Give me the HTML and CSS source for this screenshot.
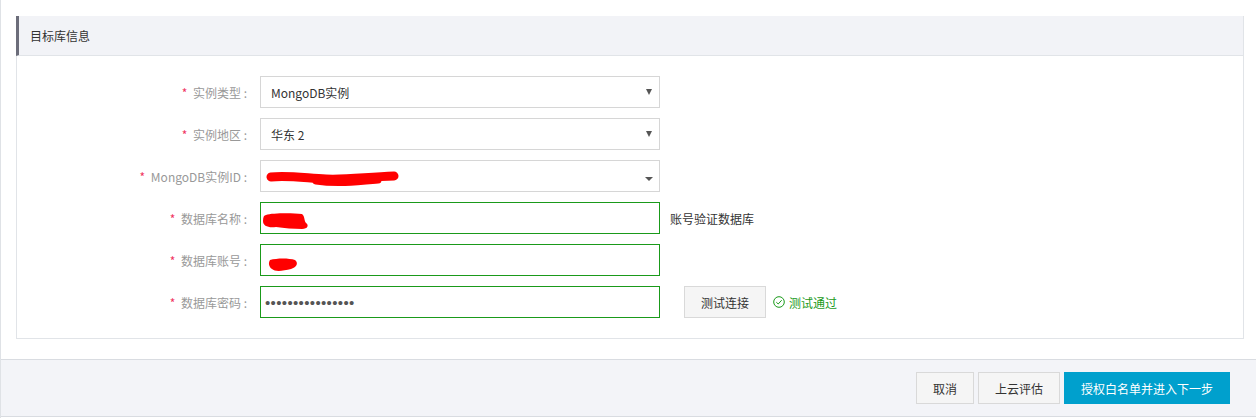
FILE: index.html
```html
<!DOCTYPE html>
<html lang="zh-CN">
<head>
<meta charset="utf-8">
<title>目标库信息</title>
<link rel="stylesheet" href="styles.css">
</head>
<body>
<div class="page">
  <div class="main">
    <section class="panel">
      <div class="panel-head">目标库信息</div>
      <div class="panel-body">
        <div class="row">
          <label class="label"><span class="req">*</span> 实例类型 :</label>
          <div class="field select"><span class="val">MongoDB实例</span><span class="arrow"></span></div>
        </div>
        <div class="row">
          <label class="label"><span class="req">*</span> 实例地区 :</label>
          <div class="field select"><span class="val">华东 2</span><span class="arrow"></span></div>
        </div>
        <div class="row">
          <label class="label"><span class="req">*</span> MongoDB实例ID :</label>
          <div class="field select">
            <svg class="scribble s-id" width="134" height="18" viewBox="0 0 134 18">
              <path d="M5 7 C20 5, 40 8, 60 9 C80 10, 100 7, 128 6" stroke="#ff0000" stroke-width="9" fill="none" stroke-linecap="round"/>
              <path d="M50 11 C70 14, 90 12, 112 10" stroke="#ff0000" stroke-width="7" fill="none" stroke-linecap="round"/>
            </svg>
            <span class="arrow down"></span>
          </div>
        </div>
        <div class="row">
          <label class="label"><span class="req">*</span> 数据库名称 :</label>
          <div class="field input">
            <svg class="scribble s-name" width="48" height="18" viewBox="0 0 48 18">
              <path d="M4 2 C10 0, 30 0, 40 1 C43 3, 42 8, 44 10 C47 12, 46 16, 40 16 C32 16, 22 15, 14 14 C6 15, 1 13, 1 8 C1 4, 2 2, 4 2 Z" fill="#ff0000"/>
            </svg>
          </div>
          <span class="hint">账号验证数据库</span>
        </div>
        <div class="row">
          <label class="label"><span class="req">*</span> 数据库账号 :</label>
          <div class="field input">
            <svg class="scribble s-acc" width="32" height="14" viewBox="0 0 32 14">
              <path d="M3 2 C10 0, 22 0, 28 2 C31 4, 31 9, 24 11 C16 13, 8 14, 5 11 C2 9, 1 5, 3 2 Z" fill="#ff0000"/>
            </svg>
          </div>
        </div>
        <div class="row">
          <label class="label"><span class="req">*</span> 数据库密码 :</label>
          <div class="field input"><span class="dots">••••••••••••••••</span></div>
          <button class="btn test-btn" type="button">测试连接</button>
          <span class="pass">
            <svg class="ok-icon" width="12" height="12" viewBox="0 0 12 12">
              <circle cx="6" cy="6" r="5.3" fill="none" stroke="#1a9a1a" stroke-width="1"/>
              <path d="M3.3 6.2 L5.2 8 L8.7 4.2" fill="none" stroke="#1a9a1a" stroke-width="1"/>
            </svg>
            测试通过
          </span>
        </div>
      </div>
    </section>
  </div>
  <footer class="footer">
    <button class="btn" type="button">取消</button>
    <button class="btn wide" type="button">上云评估</button>
    <button class="btn primary" type="button">授权白名单并进入下一步</button>
  </footer>
</div>
</body>
</html>
```
FILE: styles.css
```css
* { box-sizing: border-box; }
html, body { margin: 0; padding: 0; background: #fff; }
body {
  font-family: "Noto Sans CJK SC", "Noto Sans", "Liberation Sans", sans-serif;
  font-size: 12px;
  color: #333;
}
.page {
  width: 1256px;
  height: 418px;
  border-left: 1px solid #dfe2e6;
  display: flex;
  flex-direction: column;
}
.main {
  padding: 16px 12px 20px 15px;
}
.panel {
  border: 1px solid #e1e4e8;
  border-top-color: #dfe2e7;
}
.panel-head {
  height: 40px;
  line-height: 39px;
  background: #f2f3f7;
  border-left: 3px solid #6c6d7a;
  border-bottom: 1px solid #e1e4e8;
  padding-left: 11px;
  margin-left: -1px;
  margin-top: -1px;
  color: #333;
}
.panel-body {
  padding: 20px 0 20px 0;
  display: flex;
  flex-direction: column;
  gap: 10px;
}
.row {
  display: flex;
  align-items: center;
  height: 32px;
}
.label {
  width: 243px;
  padding-right: 13px;
  text-align: right;
  color: #999;
  flex: none;
  white-space: nowrap;
}
.req {
  color: #f0355f;
  margin-right: 3px;
}
.field {
  width: 400px;
  height: 32px;
  border: 1px solid #d6d6d6;
  position: relative;
  display: flex;
  align-items: center;
  padding-left: 10px;
  flex: none;
}
.field .val { color: #333; }
.field.input { border-color: #1a9a1a; padding-left: 4px; }
.arrow {
  position: absolute;
  right: 7px;
  top: 12px;
  width: 0;
  height: 0;
  border-left: 3px solid transparent;
  border-right: 3px solid transparent;
  border-top: 6px solid #555;
}
.arrow.down {
  top: 16px;
  border-left-width: 4px;
  border-right-width: 4px;
  border-top-width: 4px;
  right: 6px;
}
.scribble { display: block; flex: none; }
.s-id { margin-left: -5px; margin-top: 6px; }
.s-name { margin-left: -3px; margin-top: 7px; }
.s-acc { margin-left: 2px; margin-top: 10px; }
.dots {
  font-family: "Liberation Sans", sans-serif;
  font-size: 15px;
  letter-spacing: 0.35px;
  color: #555;
  margin-top: 1px;
}
.hint {
  margin-left: 10px;
  color: #333;
}
.btn {
  font-family: inherit;
  font-size: 12px;
  height: 32px;
  border: 1px solid #d9d9d9;
  background: #f5f5f5;
  color: #333;
  padding: 0 16px;
  cursor: pointer;
}
.test-btn {
  margin-left: 24px;
  width: 82px;
  padding: 0;
}
.pass {
  margin-left: 7px;
  color: #1a9a1a;
  display: flex;
  align-items: center;
  gap: 4px;
}
.ok-icon { display: block; }
.footer {
  height: 58px;
  border-top: 1px solid #d9dce1;
  border-bottom: 1px solid #d9dce1;
  background: #f3f4f8;
  display: flex;
  justify-content: flex-end;
  align-items: center;
  gap: 4px;
  padding-right: 26px;
}
.footer .btn { width: 58px; padding: 0; }
.footer .btn.wide { width: 82px; }
.footer .btn.primary {
  width: 166px;
  background: #00a0cd;
  border-color: #00a0cd;
  color: #fff;
}
```
